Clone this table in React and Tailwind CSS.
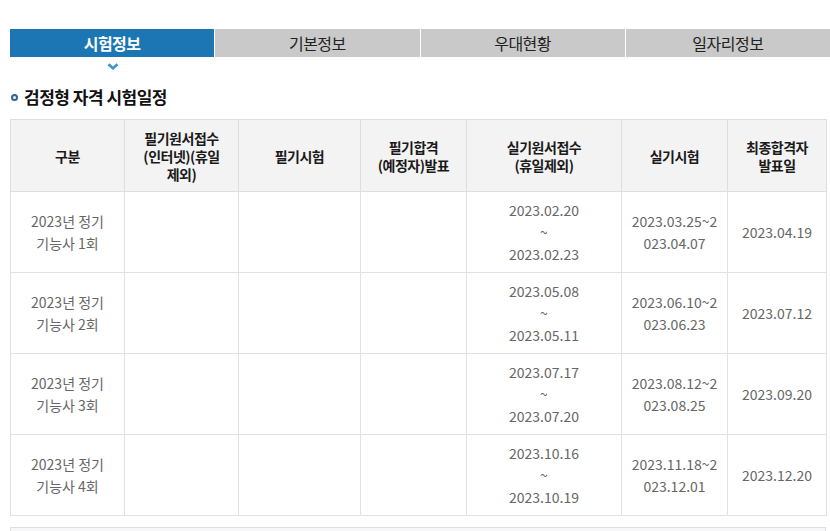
import React from 'react';

const tabs = ['시험정보', '기본정보', '우대현황', '일자리정보'];

const headers = [
  ['구분'],
  ['필기원서접수', '(인터넷)(휴일', '제외)'],
  ['필기시험'],
  ['필기합격', '(예정자)발표'],
  ['실기원서접수', '(휴일제외)'],
  ['실기시험'],
  ['최종합격자', '발표일'],
];

const colWidths = ['w-[114px]', 'w-[114px]', 'w-[122px]', 'w-[106px]', 'w-[155px]', 'w-[106px]', 'w-[99px]'];

const rows = [
  { round: 1, apply: ['2023.02.20', '2023.02.23'], exam: ['2023.03.25~2', '023.04.07'], result: '2023.04.19' },
  { round: 2, apply: ['2023.05.08', '2023.05.11'], exam: ['2023.06.10~2', '023.06.23'], result: '2023.07.12' },
  { round: 3, apply: ['2023.07.17', '2023.07.20'], exam: ['2023.08.12~2', '023.08.25'], result: '2023.09.20' },
  { round: 4, apply: ['2023.10.16', '2023.10.19'], exam: ['2023.11.18~2', '023.12.01'], result: '2023.12.20' },
];

const Lines = ({ items }) =>
  items.map((t, i) => (
    <React.Fragment key={i}>
      {i > 0 && <br />}
      {t}
    </React.Fragment>
  ));

export default function App() {
  return (
    <div
      className="min-h-[531px] bg-white pt-[29px] pl-[10px]"
      style={{ fontFamily: '"Noto Sans CJK KR", "Noto Sans", sans-serif' }}
    >
      {/* tab bar */}
      <div className="flex gap-px h-[28px]">
        {tabs.map((t, i) => (
          <div
            key={t}
            className={
              i === 0
                ? 'flex-1 flex items-center justify-center bg-[#1b76b3] text-white font-bold text-[16px] tracking-[-0.5px]'
                : 'flex-1 flex items-center justify-center bg-[#c9c9c9] text-[#222] text-[16px] tracking-[-0.5px]'
            }
          >
            {t}
          </div>
        ))}
      </div>

      <div className="w-[205px] h-[26px] flex justify-center pt-[6px]">
        <svg width="12" height="7" viewBox="0 0 12 7">
          <path d="M1.5 1.2 L6 5.2 L10.5 1.2" fill="none" stroke="#3d93d3" strokeWidth="2.6" />
        </svg>
      </div>

      <div className="h-[28px] flex items-center gap-[6px]">
        <span className="w-[7px] h-[7px] ml-px rounded-full border-2 border-[#2c6496] bg-white" />
        <h3 className="text-[17px] font-bold text-[#111] tracking-[-0.5px]">검정형 자격 시험일정</h3>
      </div>

      <table className="mt-[8px] w-[816px] table-fixed border-collapse text-[14px]">
        <colgroup>
          {colWidths.map((w, i) => (
            <col key={i} className={w} />
          ))}
        </colgroup>
        <thead>
          <tr>
            {headers.map((h, i) => (
              <th
                key={i}
                className="h-[72px] border border-[#dedede] bg-[#f3f3f3] text-center align-middle font-bold text-[#1a1a1a] leading-[18px] tracking-[-0.5px]"
              >
                <Lines items={h} />
              </th>
            ))}
          </tr>
        </thead>
        <tbody className="text-[#666] leading-[22px]">
          {rows.map((r) => (
            <tr key={r.round}>
              <td className="h-[81px] border border-[#e2e2e2] text-center align-middle">
                2023년 정기
                <br />
                기능사 {r.round}회
              </td>
              <td className="border border-[#e2e2e2]" />
              <td className="border border-[#e2e2e2]" />
              <td className="border border-[#e2e2e2]" />
              <td className="border border-[#e2e2e2] text-center align-middle">
                {r.apply[0]}
                <br />~<br />
                {r.apply[1]}
              </td>
              <td className="border border-[#e2e2e2] text-center align-middle">
                <Lines items={r.exam} />
              </td>
              <td className="border border-[#e2e2e2] text-center align-middle">{r.result}</td>
            </tr>
          ))}
        </tbody>
      </table>

      <div className="mt-[11px] w-[816px] h-[20px] border border-[#e0e0e0] bg-[#f7f7f9]" />
    </div>
  );
}
